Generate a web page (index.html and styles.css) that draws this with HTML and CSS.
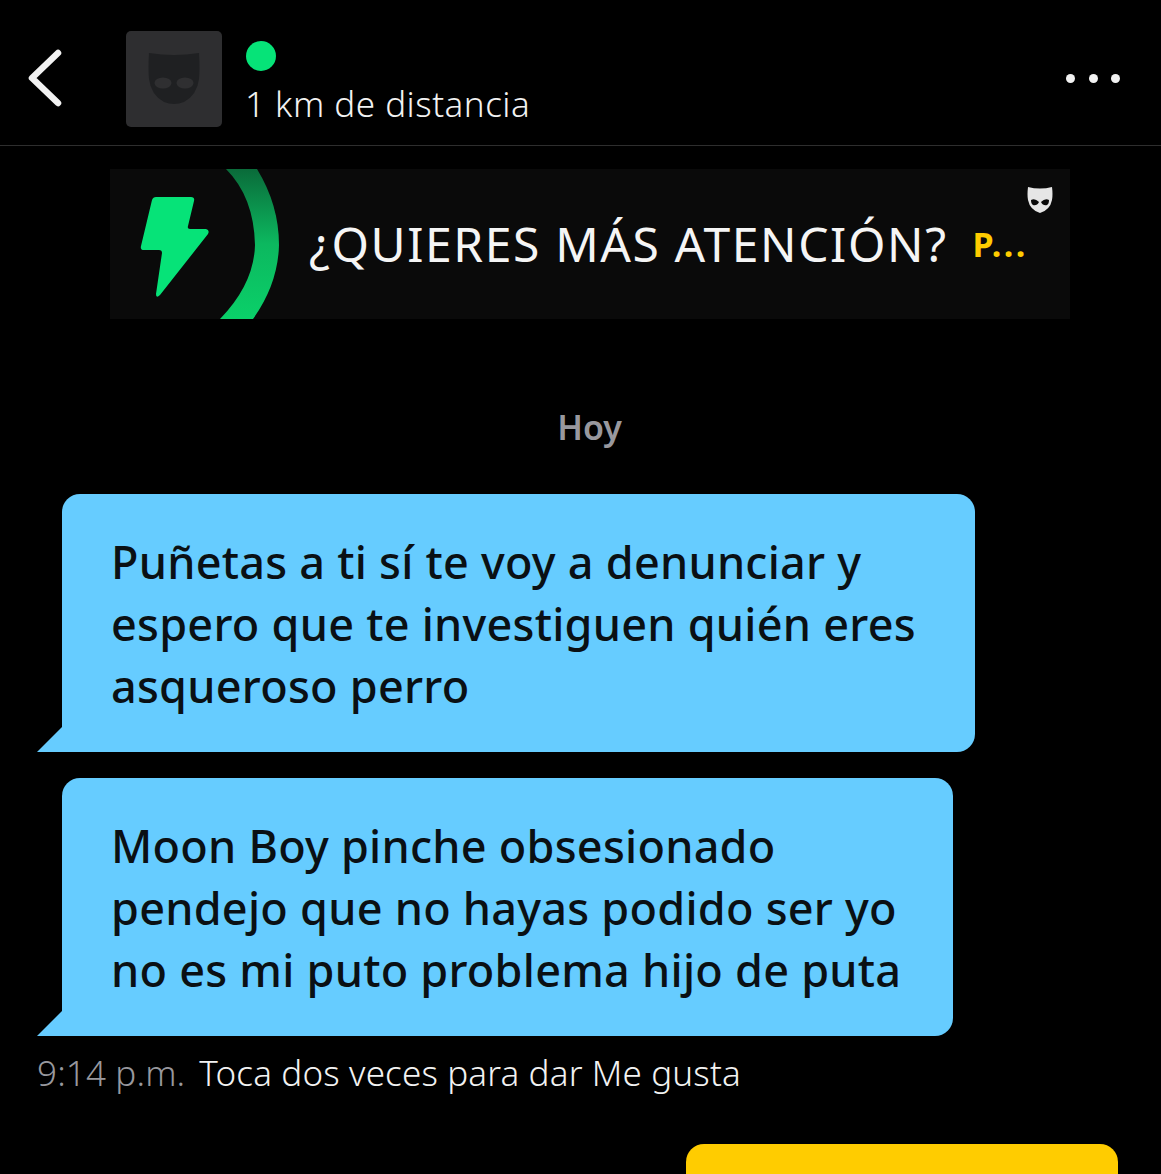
FILE: index.html
```html
<!DOCTYPE html>
<html lang="es">
<head>
  <meta charset="UTF-8" />
  <title>Chat</title>
  <link rel="stylesheet" href="styles.css">
</head>
<body>
  <header class="topo">
    <svg class="voltar" width="36" height="60" viewBox="0 0 36 60">
      <path d="M31 4 L5 29 L31 54" fill="none" stroke="#f2f2f2" stroke-width="6.5" stroke-linecap="round" stroke-linejoin="round"/>
    </svg>
    <div class="avatar">
      <svg width="54" height="56" viewBox="0 0 54 56">
        <path d="M2 2 Q27 6 52 2 Q53 18 52 28 Q50 44 37 51 Q27 55 17 51 Q4 44 2 28 Q1 18 2 2 Z" fill="#1f2022"/>
        <ellipse cx="16" cy="32" rx="8.5" ry="5.5" fill="#2f2f31"/>
        <ellipse cx="38" cy="32" rx="8.5" ry="5.5" fill="#2f2f31"/>
      </svg>
    </div>
    <div class="info">
      <span class="online"></span>
      <span class="distancia">1 km de distancia</span>
    </div>
    <div class="mais">
      <span></span><span></span><span></span>
    </div>
  </header>

  <section class="anuncio">
    <svg class="anuncio-arte" width="170" height="150" viewBox="0 0 170 150">
      <defs>
        <linearGradient id="arco" x1="0" y1="0" x2="0" y2="1">
          <stop offset="0" stop-color="#0a6b3a"/>
          <stop offset="0.5" stop-color="#0cb85f"/>
          <stop offset="1" stop-color="#0ad069"/>
        </linearGradient>
      </defs>
      <path d="M116 0 H147 Q169 36 169 76 Q168 115 143 150 H110 Q144 115 145 76 Q144 28 116 0 Z" fill="url(#arco)"/>
      <path d="M42 31 Q43 28 46 28 H81 Q85 28 84 32 L78 57 Q77 60 80 60 H96 Q100 61 98 65 L50 126 Q46 130 46 125 L52 84 Q52 81 49 81 H34 Q30 81 31 77 Z" fill="#06e378"/>
    </svg>
    <span class="anuncio-texto">¿QUIERES MÁS ATENCIÓN?</span>
    <span class="anuncio-acao">P...</span>
    <svg class="anuncio-logo" width="26" height="27" viewBox="0 0 26 27">
      <path d="M1 0 Q13 3 25 0 Q26 8 25 13 Q23 23 13 26 Q3 23 1 13 Q0 8 1 0 Z" fill="#e6e6e6"/>
      <path d="M4 13 Q8 11 12 15 Q10 19 6 18 Q4 17 4 13 Z" fill="#0a0a0a"/>
      <path d="M22 13 Q18 11 14 15 Q16 19 20 18 Q22 17 22 13 Z" fill="#0a0a0a"/>
    </svg>
  </section>

  <div class="dia">Hoy</div>

  <div class="conversa">
    <div class="balao balao-1">Puñetas a ti sí te voy a denunciar y<br>espero que te investiguen quién eres<br>asqueroso perro</div>
    <div class="balao balao-2">Moon Boy pinche obsesionado<br>pendejo que no hayas podido ser yo<br>no es mi puto problema hijo de puta</div>
  </div>

  <div class="rodape">
    <span class="hora">9:14 p.m.</span>
    <span class="dica">Toca dos veces para dar Me gusta</span>
  </div>

  <div class="balao-amarelo"></div>
</body>
</html>
```

FILE: styles.css
```css
html, body {
  height: 1174px;
  overflow: hidden;
}
body {
  background-color: #000;
  color: #fff;
  font-family: "Noto Sans", sans-serif;
  margin: 0;
}
.topo {
  display: flex;
  align-items: flex-start;
  height: 145px;
  border-bottom: 1px solid #2e2e2e;
}
.voltar {
  margin: 49px 0 0 27px;
  flex: none;
}
.avatar {
  display: flex;
  align-items: center;
  justify-content: center;
  width: 96px;
  height: 96px;
  margin: 31px 0 0 63px;
  background-color: #2e2e30;
  border-radius: 5px;
  flex: none;
}
.info {
  display: flex;
  flex-direction: column;
  margin: 41px 0 0 24px;
}
.online {
  width: 30px;
  height: 30px;
  border-radius: 50%;
  background-color: #06e378;
}
.distancia {
  margin-top: 12px;
  margin-left: -1px;
  font-size: 35px;
  line-height: 42px;
  font-weight: 300;
  letter-spacing: 0.5px;
  color: #f2f2f2;
}
.mais {
  display: flex;
  gap: 13.5px;
  margin: 74px 41px 0 auto;
}
.mais span {
  width: 9px;
  height: 9px;
  border-radius: 50%;
  background-color: #f2f2f2;
}
.anuncio {
  position: relative;
  display: flex;
  align-items: center;
  width: 960px;
  height: 150px;
  margin: 23px 0 0 110px;
  background-color: #0a0a0a;
}
.anuncio-arte {
  flex: none;
}
.anuncio-texto {
  margin-left: 29px;
  margin-bottom: 1px;
  font-size: 48px;
  letter-spacing: 1.6px;
  color: #f5f5f5;
  white-space: nowrap;
}
.anuncio-acao {
  margin-left: 25px;
  font-size: 34px;
  font-weight: 700;
  letter-spacing: 2.5px;
  color: #ffcc00;
}
.anuncio-logo {
  position: absolute;
  top: 18px;
  right: 17px;
}
.dia {
  margin-top: 86px;
  padding-left: 18px;
  text-align: center;
  font-size: 34px;
  line-height: 44px;
  font-weight: 600;
  color: #98989e;
}
.conversa {
  display: flex;
  flex-direction: column;
  align-items: flex-start;
  gap: 26px;
  margin: 45px 0 0 62px;
}
.balao {
  position: relative;
  box-sizing: border-box;
  height: 258px;
  padding: 37px 0 0 49px;
  background-color: #66ccff;
  border-radius: 18px 18px 18px 0;
  color: #0a1014;
  font-size: 45px;
  line-height: 62px;
  font-weight: 500;
  letter-spacing: 0.25px;
  white-space: nowrap;
}
.balao::before {
  content: "";
  position: absolute;
  left: -25px;
  bottom: 0;
  border-bottom: 25px solid #66ccff;
  border-left: 25px solid transparent;
}
.balao-1 {
  width: 913px;
}
.balao-2 {
  width: 891px;
}
.rodape {
  display: flex;
  gap: 14px;
  margin: 15px 0 0 37px;
  font-size: 35px;
  line-height: 44px;
  font-weight: 300;
  letter-spacing: 0.15px;
}
.hora {
  color: #98989e;
}
.dica {
  color: #f2f2f2;
}
.balao-amarelo {
  width: 432px;
  height: 60px;
  margin: 49px 0 0 686px;
  background-color: #ffcc00;
  border-radius: 18px 18px 0 0;
}
```
